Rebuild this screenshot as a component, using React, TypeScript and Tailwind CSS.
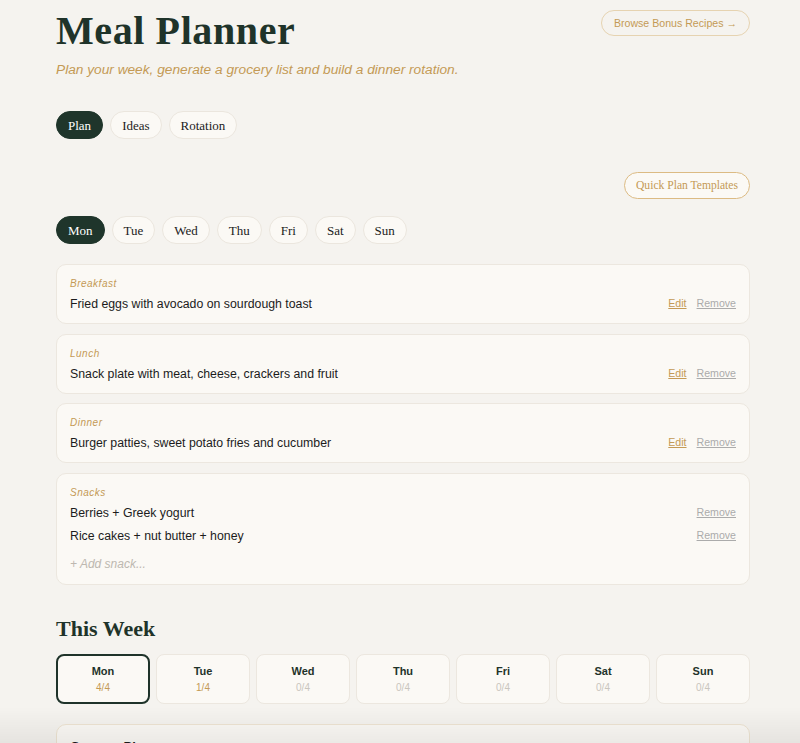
import { useState } from 'react';

const serif = { fontFamily: '"Liberation Serif", "Times New Roman", serif' };
const sans = { fontFamily: '"Liberation Sans", Arial, sans-serif' };

interface Meal {
  label: string;
  text: string;
}

const meals: Meal[] = [
  { label: 'Breakfast', text: 'Fried eggs with avocado on sourdough toast' },
  { label: 'Lunch', text: 'Snack plate with meat, cheese, crackers and fruit' },
  { label: 'Dinner', text: 'Burger patties, sweet potato fries and cucumber' },
];

const snacks = ['Berries + Greek yogurt', 'Rice cakes + nut butter + honey'];

const days = ['Mon', 'Tue', 'Wed', 'Thu', 'Fri', 'Sat', 'Sun'];
const counts = ['4/4', '1/4', '0/4', '0/4', '0/4', '0/4', '0/4'];

export default function App() {
  const [tab, setTab] = useState('Plan');
  const [day, setDay] = useState('Mon');

  return (
    <div className="min-h-screen bg-[#f5f3ef] text-[#1c1c1c]" style={sans}>
      <div className="pl-[56px] pr-[50px] pt-[10px] pb-10">
        {/* HEADER */}
        <div className="flex items-start justify-between">
          <div>
            <h1 className="mt-[1px] text-[40px] leading-none font-bold tracking-[0.6px] text-[#1f332a]" style={serif}>
              Meal Planner
            </h1>
            <p className="mt-[9px] text-[13.7px] leading-5 italic text-[#c49a55]">
              Plan your week, generate a grocery list and build a dinner rotation.
            </p>
          </div>
          <button className="h-[26px] px-[12px] rounded-full border border-[#e6d3b1] text-[10.6px] text-[#c49a55] leading-none">
            Browse Bonus Recipes →
          </button>
        </div>

        {/* TABS */}
        <div className="mt-[31px] flex gap-[7px]" style={serif}>
          {['Plan', 'Ideas', 'Rotation'].map(t => (
            <button
              key={t}
              onClick={() => setTab(t)}
              className={`h-[28px] px-[11px] rounded-full text-[13px] leading-none border ${tab === t ? 'bg-[#1f352b] border-[#1f352b] text-white' : 'bg-[#fbf9f5] border-[#ebe6de] text-[#1c1c1c]'}`}
            >
              {t}
            </button>
          ))}
        </div>

        <div className="mt-[33px] flex justify-end">
          <button
            className="h-[27px] px-[11px] rounded-full border border-[#dcbb84] bg-[#fbf9f5] text-[11.6px] leading-none text-[#c49a55]"
            style={serif}
          >
            Quick Plan Templates
          </button>
        </div>

        {/* DAY PILLS */}
        <div className="mt-[17px] flex gap-[7px]" style={serif}>
          {days.map(d => (
            <button
              key={d}
              onClick={() => setDay(d)}
              className={`h-[28px] px-[11px] rounded-full text-[13px] leading-none border ${day === d ? 'bg-[#1f352b] border-[#1f352b] text-white' : 'bg-[#fbf9f5] border-[#ebe6de] text-[#1c1c1c]'}`}
            >
              {d}
            </button>
          ))}
        </div>

        {/* MEAL CARDS */}
        <div className="mt-[20px] flex flex-col gap-[9.5px]">
          {meals.map(m => (
            <div key={m.label} className="bg-[#fbf9f5] border border-[#ece7df] rounded-[10px] px-[13px] pt-[12px] pb-[10px]">
              <div className="text-[10px] leading-[14px] italic tracking-[0.5px] text-[#c49a55]">{m.label}</div>
              <div className="mt-1 flex items-center justify-between">
                <span className="text-[12.3px] leading-[18px]">{m.text}</span>
                <div className="flex gap-[10px] text-[10.6px]">
                  <button className="underline text-[#c49a55]">Edit</button>
                  <button className="underline text-[#ababab]">Remove</button>
                </div>
              </div>
            </div>
          ))}

          <div className="bg-[#fbf9f5] border border-[#ece7df] rounded-[10px] px-[13px] pt-[12px] pb-[11px]">
            <div className="text-[10px] leading-[14px] italic tracking-[0.5px] text-[#c49a55]">Snacks</div>
            <div className="mt-[4px] flex flex-col gap-[5px]">
              {snacks.map(s => (
                <div key={s} className="flex items-center justify-between">
                  <span className="text-[12.3px] leading-[18px]">{s}</span>
                  <button className="underline text-[10.6px] text-[#ababab]">Remove</button>
                </div>
              ))}
            </div>
            <div className="mt-[10px] text-[12px] leading-[18px] italic text-[#bdb8b0]">+ Add snack...</div>
          </div>
        </div>

        {/* THIS WEEK */}
        <h2 className="mt-[31px] text-[22px] leading-[26px] font-bold text-[#1f332a]" style={serif}>
          This Week
        </h2>
        <div className="mt-[12px] grid grid-cols-7 gap-[6px]">
          {days.map((d, i) => (
            <div
              key={d}
              className={`h-[50px] rounded-[8px] flex flex-col items-center justify-center gap-[3px] bg-[#fbf9f5] ${day === d ? 'border-2 border-[#1f332a]' : 'border border-[#ece7df]'}`}
            >
              <span className="text-[11px] leading-[14px] font-bold text-[#1f332a]">{d}</span>
              <span className={`text-[10px] leading-[13px] ${counts[i] === '0/4' ? 'text-[#c9c5be]' : 'text-[#c49a55]'}`}>
                {counts[i]}
              </span>
            </div>
          ))}
        </div>

        {/* GROCERY */}
        <div className="mt-[20px] bg-[#fbf9f5] border border-[#eee4d2] rounded-[10px] px-[13px] pt-[13px] pb-6">
          <div className="text-[13px] font-bold leading-[18px]">Grocery Planner</div>
          <div className="h-40" />
        </div>
      </div>
      <div className="pointer-events-none fixed inset-x-0 bottom-0 h-[36px] bg-gradient-to-t from-black/[0.06] to-transparent" />
    </div>
  );
}
